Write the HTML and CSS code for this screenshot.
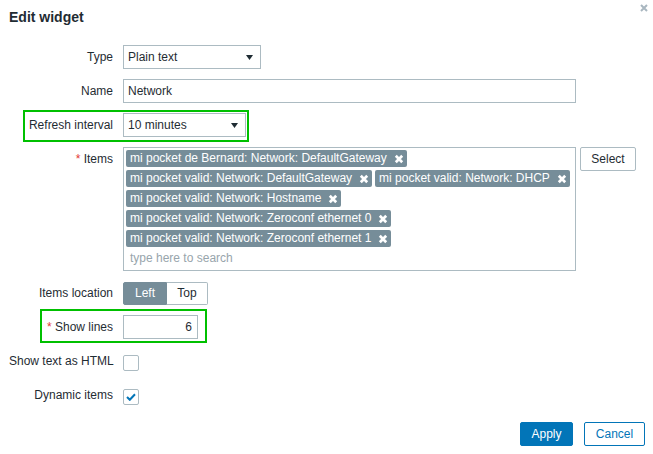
FILE: index.html
```html
<!DOCTYPE html>
<html>
<head>
<meta charset="utf-8">
<link rel="stylesheet" href="styles.css">
</head>
<body>
<div class="dialog">
  <div class="header">
    <h4 class="title">Edit widget</h4>
    <button class="close" type="button" aria-label="Close">
      <svg width="8" height="8" viewBox="0 0 8 8"><path d="M1 1L7 7M7 1L1 7" stroke="#a9b7c0" stroke-width="2" fill="none"/></svg>
    </button>
  </div>
  <form class="form">
    <div class="row">
      <label class="lbl">Type</label>
      <div class="ctl">
        <div class="select sel-type"><span>Plain text</span><svg class="arrow" width="7" height="5" viewBox="0 0 7 5"><path d="M0 0H7L3.5 5Z" fill="#1f2c33"/></svg></div>
      </div>
    </div>
    <div class="row">
      <label class="lbl">Name</label>
      <div class="ctl"><div class="input wide">Network</div></div>
    </div>
    <div class="row">
      <div class="mark mark-refresh"></div>
      <label class="lbl">Refresh interval</label>
      <div class="ctl">
        <div class="select sel-refresh"><span>10 minutes</span><svg class="arrow" width="7" height="5" viewBox="0 0 7 5"><path d="M0 0H7L3.5 5Z" fill="#1f2c33"/></svg></div>
      </div>
    </div>
    <div class="row">
      <label class="lbl"><span class="req">*</span> Items</label>
      <div class="ctl items-ctl">
        <div class="multi">
          <span class="tag">mi pocket de Bernard: Network: DefaultGateway<svg class="tx" width="10" height="10" viewBox="0 0 10 10"><path d="M1.8 1.8L8.2 8.2M8.2 1.8L1.8 8.2" stroke="#fff" stroke-width="2.7" fill="none"/></svg></span>
          <span class="tag">mi pocket valid: Network: DefaultGateway<svg class="tx" width="10" height="10" viewBox="0 0 10 10"><path d="M1.8 1.8L8.2 8.2M8.2 1.8L1.8 8.2" stroke="#fff" stroke-width="2.7" fill="none"/></svg></span>
          <span class="tag">mi pocket valid: Network: DHCP<svg class="tx" width="10" height="10" viewBox="0 0 10 10"><path d="M1.8 1.8L8.2 8.2M8.2 1.8L1.8 8.2" stroke="#fff" stroke-width="2.7" fill="none"/></svg></span>
          <span class="tag">mi pocket valid: Network: Hostname<svg class="tx" width="10" height="10" viewBox="0 0 10 10"><path d="M1.8 1.8L8.2 8.2M8.2 1.8L1.8 8.2" stroke="#fff" stroke-width="2.7" fill="none"/></svg></span>
          <span class="tag">mi pocket valid: Network: Zeroconf ethernet 0<svg class="tx" width="10" height="10" viewBox="0 0 10 10"><path d="M1.8 1.8L8.2 8.2M8.2 1.8L1.8 8.2" stroke="#fff" stroke-width="2.7" fill="none"/></svg></span>
          <span class="tag">mi pocket valid: Network: Zeroconf ethernet 1<svg class="tx" width="10" height="10" viewBox="0 0 10 10"><path d="M1.8 1.8L8.2 8.2M8.2 1.8L1.8 8.2" stroke="#fff" stroke-width="2.7" fill="none"/></svg></span>
          <span class="search">type here to search</span>
        </div>
        <button class="btn-grey" type="button">Select</button>
      </div>
    </div>
    <div class="row row-seg">
      <label class="lbl">Items location</label>
      <div class="ctl">
        <div class="seg"><span class="seg-on">Left</span><span class="seg-off">Top</span></div>
      </div>
    </div>
    <div class="row">
      <div class="mark mark-lines"></div>
      <label class="lbl"><span class="req">*</span> Show lines</label>
      <div class="ctl"><div class="input num">6</div></div>
    </div>
    <div class="row">
      <label class="lbl">Show text as HTML</label>
      <div class="ctl"><span class="check"></span></div>
    </div>
    <div class="row">
      <label class="lbl">Dynamic items</label>
      <div class="ctl"><span class="check"><svg width="10" height="8" viewBox="0 0 10 8"><path d="M1 4L3.8 6.8L9 1.2" stroke="#0275b8" stroke-width="2" fill="none"/></svg></span></div>
    </div>
  </form>
  <div class="footer">
    <button class="btn-apply" type="button">Apply</button>
    <button class="btn-cancel" type="button">Cancel</button>
  </div>
</div>
</body>
</html>
```

FILE: styles.css
```css
* { box-sizing: border-box; }
html, body { margin: 0; padding: 0; background: #fff; }
body {
  font-family: "Liberation Sans", Arial, sans-serif;
  font-size: 12px;
  color: #1f2c33;
}
.dialog { width: 653px; height: 454px; }
.header {
  display: flex;
  justify-content: space-between;
  align-items: flex-start;
}
.title {
  margin: 9px 0 0 9px;
  font-size: 14px;
  font-weight: bold;
  line-height: 16px;
  color: #1f2c33;
}
.close {
  margin: 4px 5px 0 0;
  padding: 0;
  border: 0;
  background: none;
  width: 8px;
  height: 8px;
  display: flex;
}
.form {
  display: flex;
  flex-direction: column;
  gap: 10px;
  margin-top: 20px;
  padding-left: 9px;
}
.row {
  position: relative;
  display: flex;
  align-items: flex-start;
  gap: 10px;
}
.lbl {
  width: 104px;
  flex: none;
  text-align: right;
  line-height: 24px;
  white-space: nowrap;
  position: relative;
  z-index: 1;
}
.req { color: #e33734; }
.ctl {
  display: flex;
  align-items: center;
  min-height: 24px;
  position: relative;
  z-index: 1;
}
.select, .input {
  height: 24px;
  border: 1px solid #acbbc2;
  background: #fff;
  display: flex;
  align-items: center;
  padding: 0 7px 0 4px;
  line-height: 22px;
}
.select { justify-content: space-between; }
.sel-type { width: 138px; }
.sel-refresh { width: 123px; }
.arrow { flex: none; }
.wide { width: 453px; }
.num { width: 75px; justify-content: flex-end; padding-right: 5px; }
.items-ctl { align-items: flex-start; gap: 4px; }
.multi {
  width: 453px;
  height: 124px;
  border: 1px solid #acbbc2;
  padding: 2px 2px 0 2px;
  display: flex;
  flex-wrap: wrap;
  align-content: flex-start;
  gap: 3px;
}
.tag {
  display: inline-flex;
  align-items: center;
  height: 17px;
  line-height: 17px;
  background: #768d99;
  color: #fff;
  border-radius: 2px;
  padding: 0 3px 0 4px;
  white-space: nowrap;
}
.tx { margin-left: 7px; flex: none; }
.search {
  width: 100%;
  height: 17px;
  line-height: 17px;
  padding-left: 4px;
  color: #98a5ac;
}
.btn-grey {
  width: 56px;
  height: 24px;
  border: 1px solid #acbbc2;
  background: #fff;
  color: #1f2c33;
  font: inherit;
  padding: 0;
  border-radius: 2px;
}
.seg { display: flex; height: 23px; }
.seg span {
  display: flex;
  align-items: center;
  justify-content: center;
  height: 23px;
}
.seg-on {
  width: 44px;
  background: #768d99;
  border: 1px solid #768d99;
  color: #fff;
  border-radius: 2px 0 0 2px;
}
.seg-off {
  width: 41px;
  background: #fff;
  border: 1px solid #acbbc2;
  border-left: 0;
  border-radius: 0 2px 2px 0;
}
.check {
  width: 16px;
  height: 16px;
  border: 1px solid #acbbc2;
  border-radius: 2px;
  background: #fff;
  display: flex;
  align-items: center;
  justify-content: center;
  margin-top: 4px;
}
.mark {
  position: absolute;
  border: 2px solid #00c000;
  z-index: 0;
}
.mark-refresh { left: 14px; top: -3px; width: 226px; height: 32px; }
.mark-lines { left: 31px; top: -6px; width: 167px; height: 34px; }
.footer {
  display: flex;
  justify-content: flex-end;
  gap: 11px;
  padding-right: 8px;
  margin-top: 15px;
}
.footer button {
  height: 24px;
  font: inherit;
  padding: 0;
  border-radius: 2px;
}
.btn-apply {
  width: 53px;
  background: #0275b8;
  border: 1px solid #0275b8;
  color: #fff;
}
.btn-cancel {
  width: 61px;
  background: #fff;
  border: 1px solid #0275b8;
  color: #0275b8;
}
```
